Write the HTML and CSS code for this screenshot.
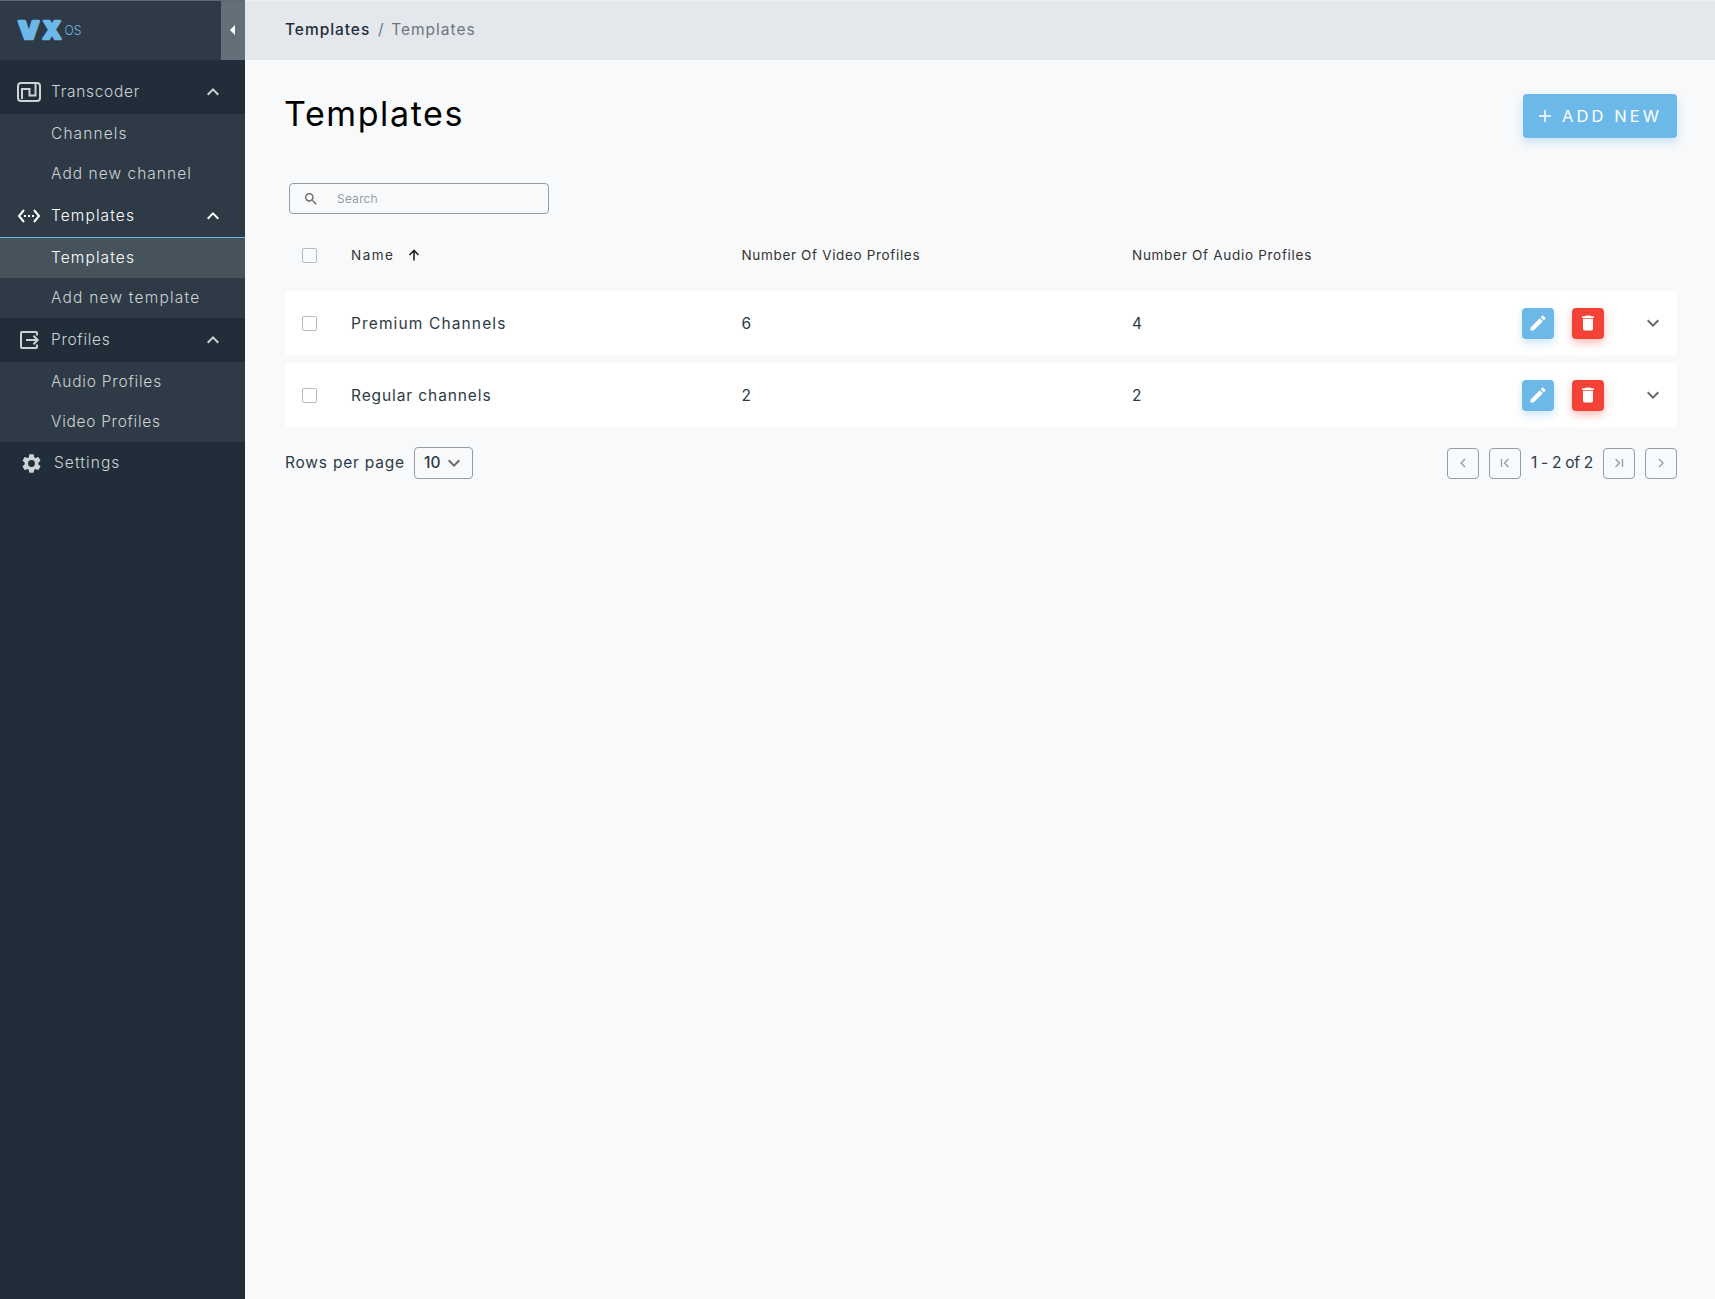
FILE: index.html
```html
<!DOCTYPE html>
<html lang="en">
<head>
<meta charset="utf-8">
<title>Templates</title>
<link rel="stylesheet" href="styles.css">
</head>
<body>
<svg class="defs" aria-hidden="true">
  <symbol id="up" viewBox="0 0 24 24"><path d="M12 8l-6 6 1.41 1.41L12 10.83l4.59 4.58L18 14z"/></symbol>
  <symbol id="down" viewBox="0 0 24 24"><path d="M7.41 8.59L12 13.17l4.59-4.58L18 10l-6 6-6-6z"/></symbol>
  <symbol id="edit" viewBox="0 0 24 24"><path d="M3 17.25V21h3.75L17.81 9.94l-3.75-3.75L3 17.25zM20.71 7.04a1 1 0 0 0 0-1.41l-2.34-2.34a1 1 0 0 0-1.41 0l-1.83 1.83 3.75 3.75 1.83-1.83z"/></symbol>
  <symbol id="trash" viewBox="0 0 24 24"><path d="M6 19c0 1.1.9 2 2 2h8c1.100 0 2-.9 2-2V7H6v12zM19 4h-3.500l-1-1h-5l-1 1H5v2h14V4z"/></symbol>
</svg>
<div class="app">
  <aside class="sidebar">
    <div class="brand">
      <svg class="logo" viewBox="0 0 70 30" width="70" height="30"><text class="logo-vx" x="3.200" y="24.300" textLength="21" lengthAdjust="spacingAndGlyphs">V</text><text class="logo-vx" x="27.700" y="24.300" textLength="18.500" lengthAdjust="spacingAndGlyphs">X</text><text class="logo-os" x="49.500" y="20" textLength="17" lengthAdjust="spacingAndGlyphs">OS</text></svg>
      <button class="collapse"><svg width="5" height="10" viewBox="0 0 5 10"><path d="M5 0v10L0 5z"/></svg></button>
    </div>
    <nav class="nav">
      <div class="group"><span class="icon"><svg width="24" height="20" viewBox="0 0 24 20" class="line"><rect x="1" y="1" width="22" height="18" rx="3"/><path d="M5 17V7h7.500v6.500H18.500V2"/></svg></span><span class="t w1">Transcoder</span><svg class="chev"><use href="#up"/></svg></div>
      <div class="sub"><a class="item"><span class="t w2">Channels</span></a><a class="item"><span class="t w3">Add new channel</span></a></div>
      <div class="group active"><span class="icon"><svg width="24" height="14" viewBox="0 0 24 14" class="line"><path d="M7 1L2 7l5 6M17 1l5 6-5 6"/><path d="M7 7h2M11 7h2M15 7h2"/></svg></span><span class="t w4">Templates</span><svg class="chev"><use href="#up"/></svg></div>
      <div class="sub"><a class="item current"><span class="t w4">Templates</span></a><a class="item"><span class="t w5">Add new template</span></a></div>
      <div class="group"><span class="icon inset"><svg width="20" height="18" viewBox="0 0 20 18" class="line"><path d="M17 4.500V2a1 1 0 0 0-1-1H2a1 1 0 0 0-1 1v14a1 1 0 0 0 1 1h14a1 1 0 0 0 1-1v-2.500M6 9h12M13.500 4.800L17.700 9l-4.200 4.200"/></svg></span><span class="t w6">Profiles</span><svg class="chev"><use href="#up"/></svg></div>
      <div class="sub"><a class="item"><span class="t w7">Audio Profiles</span></a><a class="item"><span class="t w8">Video Profiles</span></a></div>
      <div class="group settings"><span class="icon"><svg width="23" height="23" viewBox="0 0 24 24"><path d="M19.140 12.940c.04-.3.060-.61.060-.94 0-.32-.02-.64-.07-.94l2.030-1.580a.49.49 0 0 0 .12-.61l-1.920-3.320a.488.488 0 0 0-.59-.22l-2.390.96c-.5-.38-1.030-.7-1.620-.94l-.36-2.540a.484.484 0 0 0-.48-.41h-3.840c-.24 0-.43.17-.47.41l-.36 2.540c-.59.24-1.130.57-1.620.94l-2.390-.96c-.22-.08-.47 0-.59.22L2.740 8.870c-.12.21-.08.47.12.61l2.030 1.580c-.05.3-.09.63-.09.94s.02.64.07.94l-2.030 1.580a.49.49 0 0 0-.12.61l1.920 3.320c.12.22.37.29.59.22l2.390-.96c.5.38 1.030.7 1.620.94l.36 2.540c.05.24.24.41.48.41h3.840c.24 0 .44-.17.47-.41l.36-2.540c.59-.24 1.130-.56 1.620-.94l2.390.96c.22.08.47 0 .59-.22l1.920-3.320c.12-.22.070-.47-.12-.61l-2.010-1.580zM12 15.600A3.600 3.600 0 1 1 12 8.400a3.600 3.600 0 0 1 0 7.200z"/></svg></span><span class="t w9">Settings</span></div>
    </nav>
  </aside>
  <main class="main">
    <header class="crumbs"><b class="t w10">Templates</b><span class="slash">/</span><span class="t w11">Templates</span></header>
    <div class="content">
      <div class="head"><h1><span class="t w12">Templates</span></h1><button class="add"><svg width="12" height="12" viewBox="0 0 12 12"><path d="M6 0v12M0 6h12"/></svg><span class="t w13">ADD NEW</span></button></div>
      <label class="search"><svg width="16" height="16" viewBox="0 0 24 24"><path d="M15.500 14h-.79l-.28-.27A6.470 6.470 0 0 0 16 9.500 6.500 6.500 0 1 0 9.500 16c1.610 0 3.090-.59 4.230-1.570l.27.28v.79l5 4.990L20.490 19l-4.990-5zm-6 0C7.010 14 5 11.990 5 9.500S7.010 5 9.500 5 14 7.010 14 9.500 11.990 14 9.500 14z"/></svg><span class="t w14">Search</span></label>
      <div class="row thead"><i class="box"></i><span class="name"><span class="t w15">Name</span><svg width="12" height="12" viewBox="0 0 12 12"><path d="M6 11.500V1.500M1.500 6L6 1.500 10.500 6"/></svg></span><span class="t w16">Number Of Video Profiles</span><span class="t w17">Number Of Audio Profiles</span></div>
      <div class="row card"><i class="box"></i><span class="t w18">Premium Channels</span><span class="t">6</span><span class="t">4</span><span class="acts"><button class="act"><svg><use href="#edit"/></svg></button><button class="act del"><svg><use href="#trash"/></svg></button></span><svg class="chev"><use href="#down"/></svg></div>
      <div class="row card"><i class="box"></i><span class="t w19">Regular channels</span><span class="t">2</span><span class="t">2</span><span class="acts"><button class="act"><svg><use href="#edit"/></svg></button><button class="act del"><svg><use href="#trash"/></svg></button></span><svg class="chev"><use href="#down"/></svg></div>
      <footer class="foot"><span class="t w20">Rows per page</span><span class="select"><span class="t">10</span><svg class="chev"><use href="#down"/></svg></span>
        <div class="pager"><button class="pg"><svg viewBox="0 0 14 10"><path d="M9 1L5 5l4 4"/></svg></button><button class="pg"><svg viewBox="0 0 14 10"><path d="M3.500 1v8M10.500 1l-4 4 4 4"/></svg></button><span class="range t w22">1 - 2 of 2</span><button class="pg"><svg viewBox="0 0 14 10"><path d="M3.500 1l4 4-4 4M10.500 1v8"/></svg></button><button class="pg"><svg viewBox="0 0 14 10"><path d="M5 1l4 4-4 4"/></svg></button></div></footer>
    </div>
  </main>
</div>
</body>
</html>
```
FILE: styles.css
```css
* { box-sizing: border-box; }
body { margin: 0; font: 400 15.5px/20px Inter, "Open Sans", sans-serif; color: #2c3a46; background: #f8f9fb; }
button { border: 0; padding: 0; font: inherit; display: flex; align-items: center; justify-content: center; }
.t { white-space: nowrap; }
.defs { display: none; }
.app { display: flex; min-height: 1299px; }
.sidebar { width: 245px; background: #212e3a; color: #cdd2d6; flex: none; font-weight: 300; }
.brand { height: 60px; background: #2e3a45; border-top: 1px solid #5e6a72; display: flex; align-items: center; justify-content: space-between; padding-left: 15px; }
.logo { fill: #6cb8e8; overflow: visible; margin-top: -2px; }
.logo-vx { font: 900 24px Inter, sans-serif; stroke: #6cb8e8; stroke-width: 2.5; stroke-linejoin: round; }
.logo-os { font: 300 13px Inter, sans-serif; }
.collapse { width: 24px; height: 100%; background: #626f78; fill: #fff; padding: 0 1px 2px 0; }
.nav { padding-top: 10px; }
.group { height: 44px; display: flex; align-items: center; padding: 0 20px 0 17px; }
.group .chev { margin-left: auto; fill: currentColor; }
.chev { width: 24px; height: 24px; flex: none; }
.icon { width: 34px; display: flex; flex: none; fill: currentColor; }
.inset { padding-left: 3px; }
.line { fill: none; stroke: currentColor; stroke-width: 2; }
.active { background: #2e3a45; color: #fff; border-bottom: 1px solid #6cb8e8; }
.settings { padding: 0 20px 2px; }
.sub { background: #2e3a45; }
.item { height: 40px; display: flex; align-items: center; padding-left: 51px; }
.current { background: #46535c; color: #fff; }
.main { flex: 1; }
.crumbs { height: 60px; background: #e4e7eb; border-top: 1px solid #eceef1; padding: 0 0 2px 40px; display: flex; align-items: center; color: #6b7780; }
.crumbs b { font-weight: 500; color: #212e3a; }
.slash { width: 21px; text-align: center; }
.content { padding: 34px 38px 0 40px; }
.head { display: flex; justify-content: space-between; height: 89px; align-items: flex-start; }
h1 { margin: 0 0 0 -1px; font-size: 34px; line-height: 40px; font-weight: 380; color: #000; }
.add { width: 154px; height: 44px; border-radius: 4px; background: #6cb8e8; color: #fff; box-shadow: 0 4px 10px rgba(108,184,232,.35); justify-content: flex-start; padding-left: 16px; gap: 11px; font-size: 16.5px; }
.add svg { stroke: #fff; stroke-width: 1.6; flex: none; }
.add .t { padding-bottom: 1px; }
.search { margin-left: 4px; width: 260px; height: 31px; border: 1px solid #929da6; border-radius: 4px; display: flex; align-items: center; padding-left: 13px; gap: 18px; color: #7d878e; font-size: 12px; font-weight: 300; }
.search svg { fill: #666; }
.row { display: grid; grid-template-columns: 49px 390.5px 390.5px 390px 78px 1fr; padding-left: 17px; align-items: center; }
.thead { height: 77px; padding-top: 5px; font-size: 13.5px; color: #333; }
.name { display: flex; align-items: center; gap: 13.5px; }
.name svg { stroke: #222; stroke-width: 1.6; fill: none; }
.box { width: 15px; height: 15px; border: 1px solid #b4bbc2; border-radius: 2px; }
.card { height: 64px; background: #fff; border-radius: 4px; margin-bottom: 8px; }
.card .t { padding-top: 2px; }
.acts { display: flex; gap: 18px; }
.act { width: 32px; height: 31px; border-radius: 4px; background: #6cb8e8; box-shadow: 0 4px 8px rgba(108,184,232,.35); fill: #fff; flex: none; }
.act svg { width: 20px; height: 20px; }
.del { background: #f44336; box-shadow: 0 4px 8px rgba(244,67,54,.35); }
.card .chev { justify-self: end; margin-right: 12px; fill: #6b6b6b; }
.foot { display: flex; align-items: center; margin-top: 12px; padding-top: 8px; height: 40px; }
.foot > .t { width: 119px; }
.select { display: flex; align-items: center; width: 59px; height: 32px; border: 1px solid #929da6; border-radius: 4px; padding-left: 9px; font-weight: 450; gap: 2px; fill: #6b6b6b; margin-left: 10px; }
.pager { margin-left: auto; display: flex; gap: 10px; align-items: center; }
.pg { width: 32px; height: 31px; border: 1px solid #929da6; border-radius: 4px; background: none; }
.pg svg { width: 14px; height: 10px; fill: none; stroke: #929da6; stroke-width: 1.3; }
.range { width: 62px; }
/* Tracking for each label */
.w1 { letter-spacing: .7px; }
.w2 { letter-spacing: 1.1px; }
.w3 { letter-spacing: 1.03px; }
.w4 { letter-spacing: 1.1px; }
.w5 { letter-spacing: 1.2px; }
.w6 { letter-spacing: .7px; }
.w7 { letter-spacing: .79px; }
.w8 { letter-spacing: .71px; }
.w9 { letter-spacing: 1.08px; }
.w10 { letter-spacing: .95px; }
.w11 { letter-spacing: 1px; }
.w12 { letter-spacing: 1.6px; }
.w13 { letter-spacing: 3.1px; }
.w14 { letter-spacing: .3px; }
.w15 { letter-spacing: 1.5px; }
.w16 { letter-spacing: .66px; }
.w17 { letter-spacing: .71px; }
.w18 { letter-spacing: 1.13px; }
.w19 { letter-spacing: .9px; }
.w20 { letter-spacing: .78px; }
.w22 { letter-spacing: -.3px; }
```
